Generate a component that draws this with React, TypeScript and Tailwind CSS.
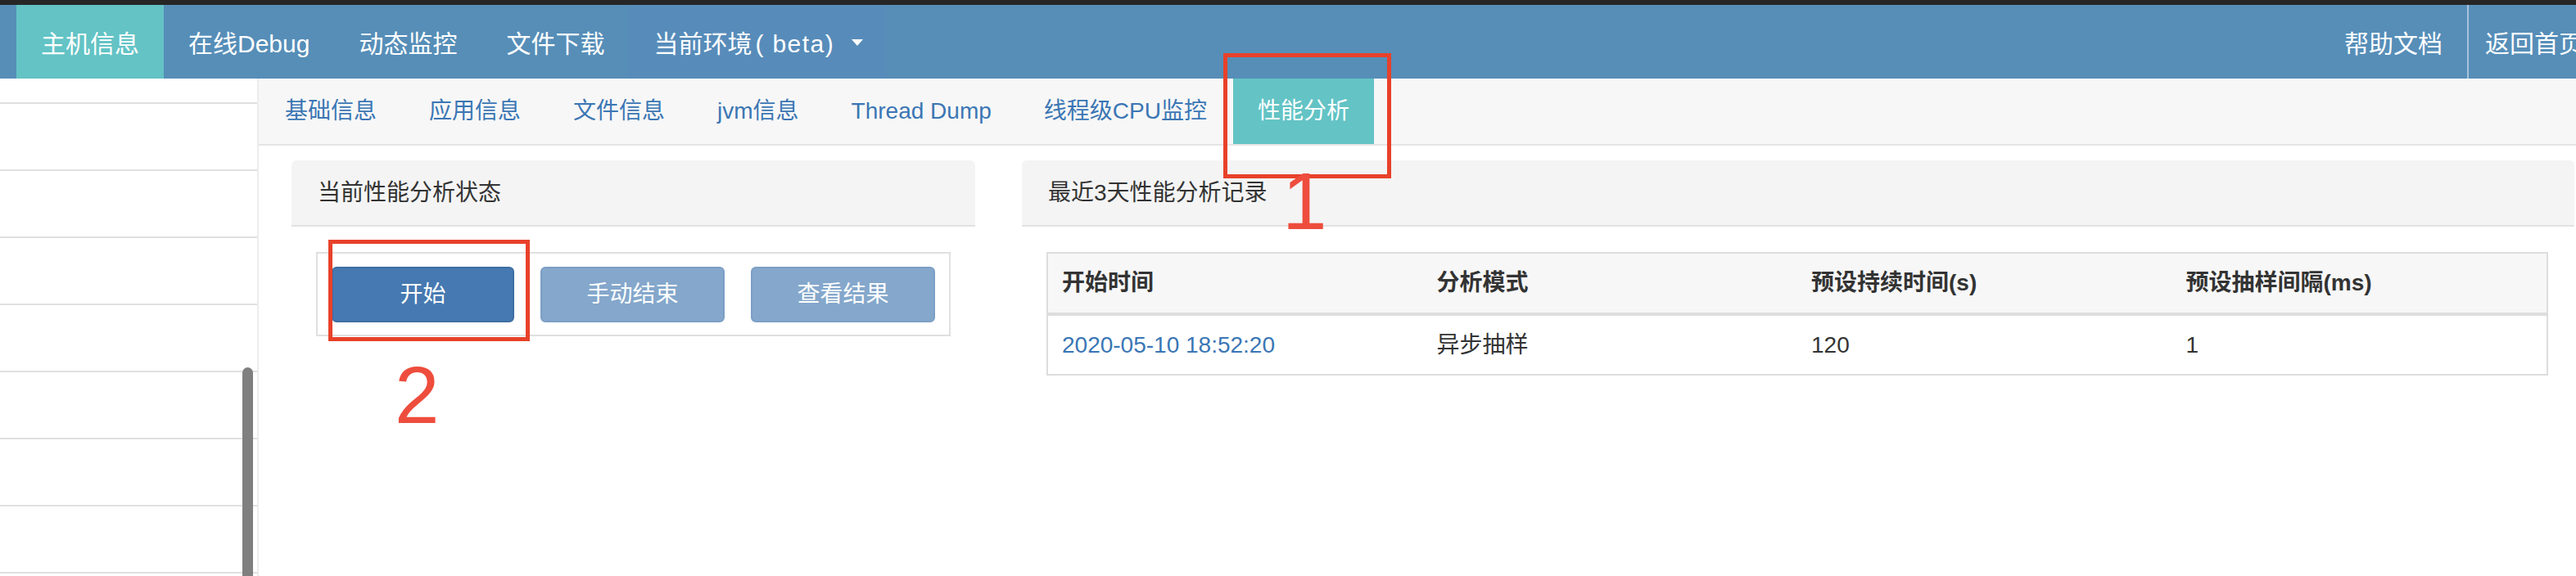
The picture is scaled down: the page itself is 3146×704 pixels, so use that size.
export default function App() {
  const navItem = "flex items-center px-[30px] pt-[6px] whitespace-nowrap";
  const subItem = "flex items-center px-[32px] whitespace-nowrap text-[#3b76b4]";
  const rows = [0, 1, 2, 3, 4, 5, 6, 7];
  return (
    <div className="relative w-[3146px] h-[704px] overflow-hidden bg-white font-['Liberation_Sans','Noto_Sans_CJK_SC',sans-serif]">
      <div className="h-[6px] bg-[#262626]" />
      <nav className="flex h-[90px] bg-[#568eb8] text-[30px] leading-[40px] text-white">
        <div className="flex pl-[20px]">
          <a className={navItem + " bg-[#63c3c5]"}>主机信息</a>
          <a className={navItem}>在线Debug</a>
          <a className={navItem}>动态监控</a>
          <a className={navItem}>文件下载</a>
          <a className="flex items-center pl-[30px] pr-[28px] pt-[6px] whitespace-nowrap bg-[#578cba]">
            当前环境<span className="ml-[4px] mr-[11px]">(</span>
            <span className="tracking-[1.5px]">beta</span>)
            <span className="ml-[22px] mb-[4px] w-0 h-0 border-x-[7.5px] border-x-transparent border-t-[8px] border-t-white" />
          </a>
        </div>
        <div className="ml-auto -mr-[39px] flex">
          <a className={navItem}>帮助文档</a>
          <div className="w-[2px] bg-[#a9c3da]" />
          <a className="flex items-center pl-[20px] pr-[30px] pt-[6px] whitespace-nowrap">返回首页</a>
        </div>
      </nav>
      <div className="flex">
        <aside className="relative w-[316px] h-[608px] border-r-2 border-[#ececec]">
          <div className="h-[29px]" />
          {rows.map((r) => (
            <div key={r} className="h-[82px] border-t-2 border-[#e0e0e0]" />
          ))}
          <div className="absolute left-[296px] top-[353px] w-[13px] h-[300px] rounded-full bg-[#7f7f7f]" />
        </aside>
        <main className="flex-1">
          <div className="flex h-[82px] bg-[#f7f7f7] border-b-2 border-[#e5e5e5] text-[28px] leading-[36px]">
            <a className={subItem}>基础信息</a>
            <a className={subItem}>应用信息</a>
            <a className={subItem}>文件信息</a>
            <a className={subItem}>jvm信息</a>
            <a className={subItem}>Thread Dump</a>
            <a className={subItem}>线程级CPU监控</a>
            <a className="flex items-center px-[30px] whitespace-nowrap bg-[#63c3c5] text-white">性能分析</a>
          </div>
          <div className="flex pt-[18px] pl-[40px] gap-[57px] text-[28px] leading-[36px] text-[#333]">
            <section className="w-[835px]">
              <div className="flex items-center h-[81px] pl-[32px] bg-[#f4f4f4] border-b-2 border-[#e2e2e2] rounded-t-[6px]">
                当前性能分析状态
              </div>
              <div className="pt-[31px] px-[30px]">
                <div className="flex items-center h-[103px] gap-[32px] pl-[17px] border-2 border-[#e0e0e0]">
                  <button className="w-[223px] h-[68px] rounded-[6px] bg-[#4679b1] border-2 border-[#3d6ea3] text-white">开始</button>
                  <button className="w-[225px] h-[68px] rounded-[6px] bg-[#84a7cb] border-2 border-[#7c9fc6] text-white">手动结束</button>
                  <button className="w-[225px] h-[68px] rounded-[6px] bg-[#84a7cb] border-2 border-[#7c9fc6] text-white">查看结果</button>
                </div>
              </div>
            </section>
            <section className="w-[1896px]">
              <div className="flex items-center h-[81px] pl-[32px] bg-[#f4f4f4] border-b-2 border-[#e2e2e2] rounded-t-[6px]">
                最近3天性能分析记录
              </div>
              <div className="pt-[31px] pl-[30px] pr-[32px]">
                <div className="border-2 border-[#dddddd]">
                  <div className="grid grid-cols-4 h-[76px] bg-[#f7f7f7] border-b-4 border-[#dddddd] font-bold">
                    <div className="flex items-center pl-[17px]">开始时间</div>
                    <div className="flex items-center pl-[17px]">分析模式</div>
                    <div className="flex items-center pl-[17px]">预设持续时间(s)</div>
                    <div className="flex items-center pl-[17px]">预设抽样间隔(ms)</div>
                  </div>
                  <div className="grid grid-cols-4 h-[71px]">
                    <div className="flex items-center pl-[17px] text-[#3a76b5]">2020-05-10 18:52:20</div>
                    <div className="flex items-center pl-[17px]">异步抽样</div>
                    <div className="flex items-center pl-[17px]">120</div>
                    <div className="flex items-center pl-[17px]">1</div>
                  </div>
                </div>
              </div>
            </section>
          </div>
        </main>
      </div>
      <div className="absolute left-[1494px] top-[65px] w-[205px] h-[153px] border-[5px] border-[#e8412a]" />
      <div className="absolute left-[401px] top-[293px] w-[246px] h-[124px] border-[5px] border-[#e8412a]" />
      <span className="absolute left-[1566px] top-[197px] text-[98px] leading-none text-[#ee4d3d]">1</span>
      <span className="absolute left-[482px] top-[434px] text-[98px] leading-none text-[#ee4d3d]">2</span>
    </div>
  );
}
